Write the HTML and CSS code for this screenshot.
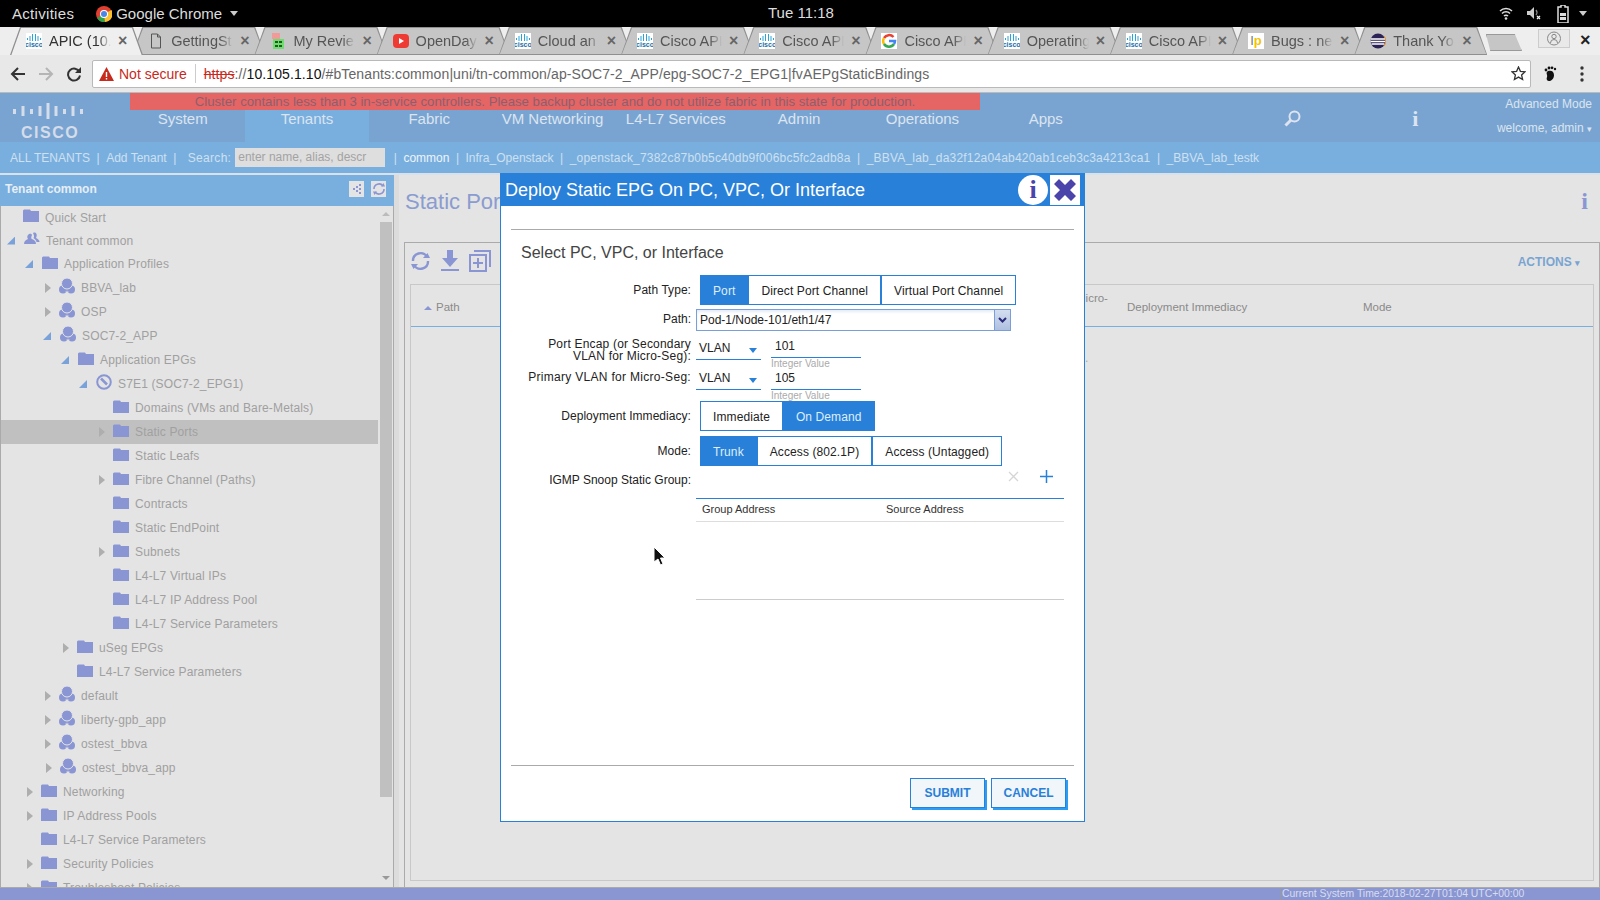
FILE: index.html
```html
<!DOCTYPE html>
<html lang="en">
<head>
  <meta charset="UTF-8" />
  <title>APIC</title>
  <link rel="stylesheet" href="styles.css">
</head>
<body>
  <svg class="defs" width="0" height="0">
    <symbol id="cisco-bars" viewBox="0 0 16 8">
      <path d="M1 5h1v2H1zM3.500 3h1v5h-1zM6 1h1v7H6zM9 1h1v7H9zM11.500 3h1v5h-1zM14 5h1v2h-1z" fill="#2aa3d8"/>
    </symbol>
    <symbol id="folder" viewBox="0 0 16 13">
      <path d="M0 1.500 1 .5h6l1 1.500h8v11H0z" fill="#8a96d3"/>
    </symbol>
    <symbol id="profile" viewBox="0 0 16 16">
      <circle cx="4" cy="11.500" r="4" fill="#8a96d3"/>
      <circle cx="12" cy="11.500" r="4" fill="#8a96d3"/>
      <circle cx="8" cy="5.500" r="5.500" fill="#8a96d3" stroke="#e4e4e4" stroke-width="1"/>
      <path d="M6.500 14a3 3 0 0 0 3 0" stroke="#e4e4e4" fill="none"/>
    </symbol>
  </svg>

  <div class="page">
    <!-- barra do sistema -->
    <div class="topbar">
      <span class="top-item activities">Activities</span>
      <svg class="chrome-logo" width="16" height="16" viewBox="0 0 16 16">
        <circle cx="8" cy="8" r="8" fill="#e0402f"/>
        <path d="M8 8 1 12a8 8 0 0 0 8 4z" fill="#2ea24a"/>
        <path d="M8 8l1 8a8 8 0 0 0 6.500-12z" fill="#fbc02d"/>
        <circle cx="8" cy="8" r="4" fill="#fff"/>
        <circle cx="8" cy="8" r="3" fill="#4a86e8"/>
      </svg>
      <span class="top-item">Google Chrome</span>
      <span class="top-caret"></span>
      <span class="clock">Tue 11:18</span>
      <div class="tray">
        <svg width="14" height="13" viewBox="0 0 14 13"><path d="M1 4a8.500 8.500 0 0 1 12 0M3 6.500a5.500 5.500 0 0 1 8 0M5 9a2.800 2.800 0 0 1 4 0" fill="none" stroke="#ddd" stroke-width="1.500"/><circle cx="7" cy="11.500" r="1.300" fill="#ddd"/></svg>
        <svg class="tray-sound" width="16" height="15" viewBox="0 0 16 15"><path d="M1 5h3l4-4v12l-4-4H1z" fill="#ccc"/><path d="M10 4a4 4 0 0 1 0 5" stroke="#888" fill="none" stroke-width="1.300"/><path d="M11 10l3 3m0-3-3 3" stroke="#eee" stroke-width="1.300"/></svg>
        <svg width="12" height="18" viewBox="0 0 12 18"><path d="M4 0h4v2h3v16H1V2h3z" fill="none" stroke="#ddd" stroke-width="1.500"/><rect x="3" y="8" width="6" height="3" fill="#ddd"/><rect x="3" y="12" width="6" height="3" fill="#ddd"/></svg>
        <span class="top-caret"></span>
      </div>
    </div>

    <!-- abas -->
    <div class="tabstrip">
      <div class="tab tab-active"><span class="fav fav-cisco"><svg width="16" height="8"><use href="#cisco-bars"/></svg><b>cisco</b></span><span class="tab-label">APIC (10.</span><span class="tab-x">×</span></div>
      <div class="tab"><svg class="fav" width="16" height="16" viewBox="0 0 16 16"><path d="M3.500 1h6l3 3v11h-9z M9.500 1v3h3" fill="none" stroke="#555"/></svg><span class="tab-label">GettingSt</span><span class="tab-x">×</span></div>
      <div class="tab"><svg class="fav" width="16" height="16" viewBox="0 0 16 16"><rect x="2" y="0" width="8" height="6" fill="#f29a9a"/><rect x="3" y="6" width="11" height="10" fill="#6fdc6f"/><path d="M5 8h3v2H5zM9 8h3v2H9zM5 12h3v2H5zM9 12h3v2H9z" fill="#1d5c1d"/></svg><span class="tab-label">My Revie</span><span class="tab-x">×</span></div>
      <div class="tab"><svg class="fav" width="16" height="16" viewBox="0 0 16 16"><rect y="1" width="16" height="14" rx="4" fill="#ee3b33"/><path d="M6 5l5 3-5 3z" fill="#fff"/></svg><span class="tab-label">OpenDay</span><span class="tab-x">×</span></div>
      <div class="tab"><span class="fav fav-cisco"><svg width="16" height="8"><use href="#cisco-bars"/></svg><b>cisco</b></span><span class="tab-label">Cloud an</span><span class="tab-x">×</span></div>
      <div class="tab"><span class="fav fav-cisco"><svg width="16" height="8"><use href="#cisco-bars"/></svg><b>cisco</b></span><span class="tab-label">Cisco API</span><span class="tab-x">×</span></div>
      <div class="tab"><span class="fav fav-cisco"><svg width="16" height="8"><use href="#cisco-bars"/></svg><b>cisco</b></span><span class="tab-label">Cisco API</span><span class="tab-x">×</span></div>
      <div class="tab"><svg class="fav" width="16" height="16" viewBox="0 0 16 16"><rect width="16" height="16" fill="#fff"/><path d="M12.500 4A6 6 0 0 0 3 5" stroke="#e94235" stroke-width="2.500" fill="none"/><path d="M3 5a6 6 0 0 0 0 6" stroke="#fbbc05" stroke-width="2.500" fill="none"/><path d="M3 11a6 6 0 0 0 10 0" stroke="#34a853" stroke-width="2.500" fill="none"/><path d="M8 8h6a6 6 0 0 1-1 3" stroke="#4285f4" stroke-width="2.500" fill="none"/></svg><span class="tab-label">Cisco API</span><span class="tab-x">×</span></div>
      <div class="tab"><span class="fav fav-cisco"><svg width="16" height="8"><use href="#cisco-bars"/></svg><b>cisco</b></span><span class="tab-label">Operating</span><span class="tab-x">×</span></div>
      <div class="tab"><span class="fav fav-cisco"><svg width="16" height="8"><use href="#cisco-bars"/></svg><b>cisco</b></span><span class="tab-label">Cisco API</span><span class="tab-x">×</span></div>
      <div class="tab"><span class="fav fav-ip"><b>I</b><i>p</i></span><span class="tab-label">Bugs : ne</span><span class="tab-x">×</span></div>
      <div class="tab"><svg class="fav" width="16" height="16" viewBox="0 0 16 16"><circle cx="8" cy="8" r="7.500" fill="#2c2255"/><path d="M1 6h14M.5 8.500h15M1.500 11h13" stroke="#fff" stroke-width="1.300"/><path d="M14 3a7.500 7.500 0 0 1 0 10" stroke="#e8912c" fill="none"/></svg><span class="tab-label">Thank Yo</span><span class="tab-x">×</span></div>
      <div class="newtab"></div>
      <div class="profile-btn">
        <svg width="14" height="15" viewBox="0 0 14 15"><circle cx="7" cy="7.500" r="6.500" fill="none" stroke="#888"/><circle cx="7" cy="5.500" r="2.200" fill="none" stroke="#888"/><path d="M3.500 12a3.500 3.500 0 0 1 7 0" fill="none" stroke="#888"/></svg>
      </div>
      <span class="win-close">×</span>
    </div>

    <!-- barra de endereco -->
    <div class="toolbar">
      <svg class="tool-btn" width="16" height="16" viewBox="0 0 16 16"><path d="M15 8H2M8 2 2 8l6 6" fill="none" stroke="#333" stroke-width="2"/></svg>
      <svg class="tool-btn" width="16" height="16" viewBox="0 0 16 16"><path d="M1 8h13M8 2l6 6-6 6" fill="none" stroke="#b5b5b5" stroke-width="2"/></svg>
      <svg class="tool-btn" width="16" height="16" viewBox="0 0 16 16"><path d="M13.500 6A6 6 0 1 0 14 9.500" fill="none" stroke="#333" stroke-width="2"/><path d="M15 1v6H9z" fill="#333"/></svg>
      <div class="omnibox">
        <svg class="warn" width="15" height="14" viewBox="0 0 15 14"><path d="M7.500 0 15 14H0z" fill="#c62a1c"/><path d="M6.800 5h1.400v5H6.800zM6.800 11h1.400v1.500H6.800z" fill="#fff"/></svg>
        <span class="not-secure">Not secure</span>
        <span class="omni-sep"></span>
        <span class="url"><span class="url-https">https</span>://<span class="url-host">10.105.1.10</span>/#bTenants:common|uni/tn-common/ap-SOC7-2_APP/epg-SOC7-2_EPG1|fvAEPgStaticBindings</span>
        <svg class="star" width="15" height="15" viewBox="0 0 15 15"><path d="m7.500 1 1.900 4.300 4.600.5-3.400 3.100 1 4.600-4.100-2.400-4.100 2.400 1-4.600L1 5.800l4.600-.5z" fill="none" stroke="#333" stroke-width="1.300"/></svg>
      </div>
      <svg class="ext" width="14" height="16" viewBox="0 0 14 16"><path d="M5 5c3-1 6 0 6 4s-3 6-5 6-3-2-2-4-2-4 1-6z" fill="#111"/><circle cx="3" cy="4" r="1.400" fill="#111"/><circle cx="6" cy="2" r="1.400" fill="#111"/><circle cx="9" cy="1.800" r="1.400" fill="#111"/><circle cx="12" cy="3" r="1.200" fill="#111"/></svg>
      <svg class="menu-dots" width="4" height="16" viewBox="0 0 4 16"><circle cx="2" cy="2" r="1.700" fill="#333"/><circle cx="2" cy="8" r="1.700" fill="#333"/><circle cx="2" cy="14" r="1.700" fill="#333"/></svg>
    </div>

    <!-- cabecalho APIC -->
    <header class="app-header">
      <div class="logo">
        <svg width="70" height="16" viewBox="0 0 70 16"><path d="M0 6h3v5H0zM8.500 3h3v10h-3zM17 6h3v5h-3zM25.500 3h3v10h-3zM33.500 0h3v16h-3zM41.500 3h3v10h-3zM50 6h3v5h-3zM58.500 3h3v10h-3zM67 6h3v5h-3z" fill="#d5dcea"/></svg>
        <span class="logo-text">CISCO</span>
      </div>
      <div class="header-mid">
        <div class="alert-bar">Cluster contains less than 3 in-service controllers. Please backup cluster and do not utilize fabric in this state for production.</div>
        <nav class="main-nav">
          <a class="nav-item">System</a>
          <a class="nav-item nav-active">Tenants</a>
          <a class="nav-item">Fabric</a>
          <a class="nav-item">VM Networking</a>
          <a class="nav-item">L4-L7 Services</a>
          <a class="nav-item">Admin</a>
          <a class="nav-item">Operations</a>
          <a class="nav-item">Apps</a>
          <a class="nav-item nav-search">
            <svg width="17" height="17" viewBox="0 0 17 17"><circle cx="10.500" cy="6.500" r="5" fill="none" stroke="#dde4f0" stroke-width="2"/><path d="M7 10 1.500 15.500" stroke="#dde4f0" stroke-width="3"/></svg>
          </a>
          <a class="nav-item nav-info"><span class="serif-i">i</span></a>
        </nav>
      </div>
      <div class="header-right">
        <span>Advanced Mode</span>
        <span>welcome, admin <small class="tiny-caret">▾</small></span>
      </div>
    </header>

    <div class="subnav">
      <span class="sub-link first">ALL TENANTS</span><span class="bar">|</span>
      <span class="sub-link">Add Tenant</span><span class="bar">|</span>
      <span class="sub-search">Search:</span>
      <span class="sub-input">enter name, alias, descr</span>
      <span class="bar bar-gap">|</span>
      <span class="sub-link sub-current">common</span><span class="bar">|</span>
      <span class="sub-link">Infra_Openstack</span><span class="bar">|</span>
      <span class="sub-link sub-id">_openstack_7382c87b0b5c40db9f006bc5fc2adb8a</span><span class="bar">|</span>
      <span class="sub-link sub-id">_BBVA_lab_da32f12a04ab420ab1ceb3c3a4213ca1</span><span class="bar">|</span>
      <span class="sub-link">_BBVA_lab_testk</span>
    </div>

    <div class="main">
      <aside class="sidebar">
        <div class="side-head">
          <span>Tenant common</span>
          <span class="side-btn">
            <svg width="12" height="12" viewBox="0 0 12 12"><path d="M2 5h2v2H2zM5 3h2v2H5zM5 7h2v2H5zM8 1h2v2H8zM8 5h2v2H8zM8 9h2v2H8z" fill="#8a96d3"/></svg>
          </span>
          <span class="side-btn">
            <svg width="14" height="14" viewBox="0 0 14 14"><path d="M2 7a5 5 0 0 1 9-3M12 7a5 5 0 0 1-9 3" fill="none" stroke="#8a96d3" stroke-width="1.600"/><path d="M9 4.500h4L11.500 1zM5 9.500H1L2.500 13z" fill="#8a96d3"/></svg>
          </span>
        </div>
        <div class="side-body">
          <ul class="tree">
            <li class="row row-s d0"><i class="arr"></i><svg class="ti"><use href="#folder"/></svg><span>Quick Start</span></li>
            <li class="row row-s d0b"><i class="arr open"></i><svg class="ti" viewBox="0 0 16 13"><path d="M0 12c0-3 2-4 4-5-1-1-1-3 0-4s3-2 4 0c-1 2-1 4 0 4 2 1 4 2 4 5z M9 1c2-1 3 0 3.500 1s0 3-.5 4c2 1 3.500 2 3.500 4h-3c0-2-2-3-3-4 1-1 .5-3-.5-5z" fill="#8a96d3"/></svg><span class="lbl-t">Tenant common</span></li>
            <li class="row d1b"><i class="arr open"></i><svg class="ti"><use href="#folder"/></svg><span>Application Profiles</span></li>
            <li class="row d2"><i class="arr closed"></i><svg class="ti ti-p"><use href="#profile"/></svg><span>BBVA_lab</span></li>
            <li class="row d2"><i class="arr closed"></i><svg class="ti ti-p"><use href="#profile"/></svg><span>OSP</span></li>
            <li class="row d2b"><i class="arr open"></i><svg class="ti ti-p"><use href="#profile"/></svg><span>SOC7-2_APP</span></li>
            <li class="row d3b"><i class="arr open"></i><svg class="ti"><use href="#folder"/></svg><span>Application EPGs</span></li>
            <li class="row d4"><i class="arr open"></i><svg class="ti ti-p" viewBox="0 0 16 16"><circle cx="8" cy="8" r="6.800" fill="none" stroke="#8a96d3" stroke-width="2"/><path d="M5 4.500l6 6" stroke="#8a96d3" stroke-width="2.500"/></svg><span>S7E1 (SOC7-2_EPG1)</span></li>
            <li class="row d5"><i class="arr"></i><svg class="ti"><use href="#folder"/></svg><span>Domains (VMs and Bare-Metals)</span></li>
            <li class="row d5 row-sel"><i class="arr closed"></i><svg class="ti"><use href="#folder"/></svg><span>Static Ports</span></li>
            <li class="row d5"><i class="arr"></i><svg class="ti"><use href="#folder"/></svg><span>Static Leafs</span></li>
            <li class="row d5"><i class="arr closed"></i><svg class="ti"><use href="#folder"/></svg><span>Fibre Channel (Paths)</span></li>
            <li class="row d5"><i class="arr"></i><svg class="ti"><use href="#folder"/></svg><span>Contracts</span></li>
            <li class="row d5"><i class="arr"></i><svg class="ti"><use href="#folder"/></svg><span>Static EndPoint</span></li>
            <li class="row d5"><i class="arr closed"></i><svg class="ti"><use href="#folder"/></svg><span>Subnets</span></li>
            <li class="row d5"><i class="arr"></i><svg class="ti"><use href="#folder"/></svg><span>L4-L7 Virtual IPs</span></li>
            <li class="row d5"><i class="arr"></i><svg class="ti"><use href="#folder"/></svg><span>L4-L7 IP Address Pool</span></li>
            <li class="row d5"><i class="arr"></i><svg class="ti"><use href="#folder"/></svg><span>L4-L7 Service Parameters</span></li>
            <li class="row d3"><i class="arr closed"></i><svg class="ti"><use href="#folder"/></svg><span>uSeg EPGs</span></li>
            <li class="row d3"><i class="arr"></i><svg class="ti"><use href="#folder"/></svg><span>L4-L7 Service Parameters</span></li>
            <li class="row d2"><i class="arr closed"></i><svg class="ti ti-p"><use href="#profile"/></svg><span>default</span></li>
            <li class="row d2"><i class="arr closed"></i><svg class="ti ti-p"><use href="#profile"/></svg><span>liberty-gpb_app</span></li>
            <li class="row d2"><i class="arr closed"></i><svg class="ti ti-p"><use href="#profile"/></svg><span>ostest_bbva</span></li>
            <li class="row d2b"><i class="arr closed"></i><svg class="ti ti-p"><use href="#profile"/></svg><span>ostest_bbva_app</span></li>
            <li class="row d1"><i class="arr closed"></i><svg class="ti"><use href="#folder"/></svg><span>Networking</span></li>
            <li class="row d1"><i class="arr closed"></i><svg class="ti"><use href="#folder"/></svg><span>IP Address Pools</span></li>
            <li class="row d1"><i class="arr"></i><svg class="ti"><use href="#folder"/></svg><span>L4-L7 Service Parameters</span></li>
            <li class="row d1"><i class="arr closed"></i><svg class="ti"><use href="#folder"/></svg><span>Security Policies</span></li>
            <li class="row d1"><i class="arr closed"></i><svg class="ti"><use href="#folder"/></svg><span>Troubleshoot Policies</span></li>
          </ul>
          <div class="scrollbar">
            <span class="sc-up"></span>
            <span class="sc-thumb"></span>
            <span class="sc-down"></span>
          </div>
        </div>
      </aside>
      <div class="divider"></div>

      <section class="content">
        <div class="content-head">
          <h1 class="content-title">Static Ports</h1>
          <span class="serif-i content-i">i</span>
        </div>
        <div class="panel">
          <div class="panel-tools">
            <svg width="21" height="20" viewBox="0 0 21 20"><path d="M3 10a7.500 7.500 0 0 1 14-4M18 10a7.500 7.500 0 0 1-14 4" fill="none" stroke="#8a96d3" stroke-width="2.400"/><path d="M13 7h7l-2.500-5zM8 13H1l2.500 5z" fill="#8a96d3"/></svg>
            <svg width="18" height="21" viewBox="0 0 18 21"><path d="M6 0h6v8h5l-8 9-8-9h5zM0 19h18v2H0z" fill="#8a96d3"/></svg>
            <svg width="22" height="22" viewBox="0 0 22 22"><path d="M5 1h16v16M1 5h16v16H1z" fill="none" stroke="#8a96d3" stroke-width="2"/><path d="M8 8h2v4h4v2h-4v4H8v-4H4v-2h4z" fill="#8a96d3"/></svg>
            <span class="actions">ACTIONS <small class="tiny-caret">▾</small></span>
          </div>
          <div class="grid-box">
            <div class="grid-head">
              <span class="col-path"><i class="sort-up"></i>Path</span>
              <span class="col-micro">Micro-</span>
              <span class="col-deploy">Deployment Immediacy</span>
              <span class="col-mode">Mode</span>
            </div>
          </div>
        </div>
      </section>
    </div>

    <footer class="statusbar"><span class="status-time">Current System Time:2018-02-27T01:04 UTC+00:00</span></footer>
  </div>

  <!-- dialogo -->
  <div class="dialog">
    <div class="dlg-head">
      <span class="dlg-title">Deploy Static EPG On PC, VPC, Or Interface</span>
      <span class="dlg-info"><span class="serif-i">i</span></span>
      <span class="dlg-close">
        <svg width="22" height="22" viewBox="0 0 22 22"><path d="M5 0l6 6 6-6 5 5-6 6 6 6-5 5-6-6-6 6-5-5 6-6-6-6z" fill="#4a44ab"/></svg>
      </span>
    </div>
    <div class="dlg-body">
      <h2 class="dlg-heading">Select PC, VPC, or Interface</h2>

      <div class="frow frow-seg">
        <label class="flabel">Path Type:</label>
        <div class="seg"><span class="seg-btn on">Port</span><span class="seg-btn">Direct Port Channel</span><span class="seg-btn">Virtual Port Channel</span></div>
      </div>
      <div class="frow frow-path">
        <label class="flabel">Path:</label>
        <div class="combo"><span class="combo-text">Pod-1/Node-101/eth1/47</span><span class="combo-btn"><svg width="9" height="6" viewBox="0 0 9 6"><path d="M1 1l3.500 3.500L8 1" fill="none" stroke="#2b2a7c" stroke-width="2"/></svg></span></div>
      </div>
      <div class="frow frow-encap">
        <label class="flabel flabel-two">Port Encap (or Secondary<br>VLAN for Micro-Seg):</label>
        <div class="vsel vsel-tall">VLAN<i class="vsel-arrow"></i></div>
        <div class="vinput"><div class="vinput-box">101</div><div class="vhint">Integer Value</div></div>
      </div>
      <div class="frow frow-primary">
        <label class="flabel flabel-prim">Primary VLAN for Micro-Seg:</label>
        <div class="vsel">VLAN<i class="vsel-arrow"></i></div>
        <div class="vinput"><div class="vinput-box vinput-short">105</div><div class="vhint">Integer Value</div></div>
      </div>
      <div class="frow frow-seg">
        <label class="flabel">Deployment Immediacy:</label>
        <div class="seg"><span class="seg-btn">Immediate</span><span class="seg-btn on">On Demand</span></div>
      </div>
      <div class="frow frow-seg frow-mode">
        <label class="flabel">Mode:</label>
        <div class="seg"><span class="seg-btn on">Trunk</span><span class="seg-btn">Access (802.1P)</span><span class="seg-btn">Access (Untagged)</span></div>
      </div>
      <div class="frow frow-igmp">
        <label class="flabel">IGMP Snoop Static Group:</label>
        <div class="igmp-tools">
          <svg width="11" height="11" viewBox="0 0 11 11"><path d="M1 1l9 9M10 1l-9 9" stroke="#d5d5d5" stroke-width="1.300"/></svg>
          <svg width="13" height="13" viewBox="0 0 13 13"><path d="M6.500 0v13M0 6.500h13" stroke="#2880d9" stroke-width="1.500"/></svg>
        </div>
      </div>
      <div class="igmp-table">
        <div class="igmp-head"><span class="igmp-col">Group Address</span><span>Source Address</span></div>
        <div class="igmp-rows"></div>
      </div>

      <div class="dlg-foot">
        <button class="dlg-btn">SUBMIT</button>
        <button class="dlg-btn">CANCEL</button>
      </div>
    </div>
  </div>

  <svg class="cursor" width="13" height="20" viewBox="0 0 13 20"><path d="M1 1v15l4-3 2.500 6 2.500-1-2.500-6H12z" fill="#111" stroke="#fff"/></svg>
  <span class="stray-dot">.</span>
</body>
</html>
```

FILE: styles.css
```css
* {
  box-sizing: border-box;
}

html, body {
  margin: 0;
  height: 900px;
  overflow: hidden;
}

body {
  font-family: "Liberation Sans", Arial, sans-serif;
  font-size: 12px;
  background: #e4e4e4;
}

.defs {
  position: absolute;
}

.page {
  display: flex;
  flex-direction: column;
  width: 1600px;
  height: 900px;
}

/* system bar */
.topbar {
  display: flex;
  align-items: center;
  flex: 0 0 27px;
  background: #000;
  color: #ddd;
  font-size: 15px;
  padding-left: 12px;
  position: relative;
}

.activities {
  margin-right: 22px;
  letter-spacing: .3px;
}

.chrome-logo {
  margin-right: 4px;
}

.top-caret {
  display: inline-block;
  width: 0;
  height: 0;
  margin-left: 8px;
  border-left: 4.500px solid transparent;
  border-right: 4.500px solid transparent;
  border-top: 5px solid #ccc;
}

.clock {
  position: absolute;
  left: 768px;
  top: 4px;
}

.tray {
  margin-left: auto;
  display: flex;
  align-items: center;
  gap: 13px;
  padding-right: 13px;
}

.tray .top-caret {
  margin-left: -3px;
}

.tray-sound {
  margin-right: 2px;
}

/* tabs */
.tabstrip {
  display: flex;
  flex: 0 0 28px;
  background: #eeeeee;
  padding-left: 10px;
  position: relative;
  align-items: stretch;
}

.tab {
  position: relative;
  display: flex;
  align-items: center;
  flex: 0 0 133px;
  margin-right: -10.800px;
  padding-left: 16px;
  color: #555;
  font-size: 14.500px;
  background: #8f8f8f;
  clip-path: polygon(0 100%, 10px 0, calc(100% - 10px) 0, 100% 100%);
}

.tab::before {
  content: "";
  position: absolute;
  inset: 1px 0 1px 0;
  background: #c6c6c6;
  clip-path: polygon(1px 100%, 11px 0, calc(100% - 11px) 0, calc(100% - 1px) 100%);
}

.tab > * {
  position: relative;
}

.tab-active {
  z-index: 2;
  color: #333;
}

.tab-active::before {
  background: #efefef;
  inset: 1px 0 -1px 0;
}

.fav {
  flex: 0 0 16px;
  margin-right: 7px;
}

.fav-cisco {
  display: flex;
  flex-direction: column;
  align-items: center;
  height: 16px;
  background: #fff;
  overflow: hidden;
}

.fav-cisco b {
  font-size: 7px;
  line-height: 8px;
  color: #1b6fa8;
}

.fav-ip {
  display: flex;
  justify-content: center;
  height: 16px;
  background: #fff;
  font-size: 13px;
  line-height: 16px;
  color: #777;
}

.fav-ip b {
  font-weight: normal;
}

.fav-ip i {
  font-style: normal;
  font-weight: bold;
  color: #f5c400;
}

.tab-label {
  width: 62px;
  white-space: nowrap;
  overflow: hidden;
  -webkit-mask-image: linear-gradient(90deg, #000 80%, transparent);
  mask-image: linear-gradient(90deg, #000 80%, transparent);
}

.tab-x {
  margin-left: 7px;
  font-size: 16px;
  font-weight: bold;
  line-height: 16px;
  color: #666;
}

.newtab {
  position: absolute;
  left: 1486px;
  top: 7px;
  width: 36px;
  height: 17px;
  background: #c6c6c6;
  border: 1px solid #999;
  clip-path: polygon(0 0, 80% 0, 100% 100%, 12% 100%);
}

.profile-btn {
  position: absolute;
  left: 1538px;
  top: 2px;
  width: 32px;
  height: 19px;
  display: flex;
  align-items: center;
  justify-content: center;
  background: #e9e9e9;
  border: 1px solid #ccc;
}

.win-close {
  position: absolute;
  left: 1580px;
  top: 4px;
  font-size: 18px;
  font-weight: bold;
  line-height: 18px;
  color: #222;
}

/* address bar */
.toolbar {
  display: flex;
  align-items: center;
  flex: 0 0 38px;
  background: #e8e8e8;
  border-bottom: 1px solid #bbb;
  padding-left: 10px;
}

.tool-btn {
  margin-right: 12px;
}

.omnibox {
  display: flex;
  align-items: center;
  margin-left: -2px;
  width: 1439px;
  height: 28px;
  background: #fff;
  border: 1px solid #b9b9b9;
  border-radius: 2px;
  padding-left: 6px;
  font-size: 14px;
}

.warn {
  margin-right: 5px;
}

.not-secure {
  color: #c62a1c;
}

.omni-sep {
  width: 1px;
  height: 19px;
  background: #ccc;
  margin: 0 8px;
}

.url {
  color: #666;
  white-space: nowrap;
  letter-spacing: .1px;
}

.url-https {
  color: #c62a1c;
  text-decoration: line-through;
}

.url-host {
  color: #111;
}

.star {
  margin-left: auto;
  margin-right: 4px;
}

.ext {
  margin-left: 12px;
}

.menu-dots {
  margin-left: 23px;
}

/* APIC header */
.app-header {
  display: flex;
  flex: 0 0 49px;
  background: #79a4d1;
  color: #dbe4f0;
}

.logo {
  flex: 0 0 122px;
  padding: 10px 0 0 13px;
  display: flex;
  flex-direction: column;
  align-items: flex-start;
  gap: 8px;
}

.logo-text {
  margin: 0 0 0 8px;
  font-size: 16px;
  font-weight: bold;
  line-height: 12px;
  letter-spacing: 1.500px;
  color: #d5dcea;
}

.header-mid {
  display: flex;
  flex-direction: column;
  flex: 0 0 1355px;
}

.alert-bar {
  flex: 0 0 17px;
  width: 850px;
  margin-left: 8px;
  background: #e56565;
  color: #8d5f6d;
  font-size: 13.200px;
  line-height: 17px;
  text-align: center;
  white-space: nowrap;
}

.main-nav {
  display: flex;
  flex: 1;
  margin-left: -1px;
}

.nav-item {
  flex: 0 0 123.300px;
  text-align: center;
  font-size: 15px;
  line-height: 17px;
  color: #dbe4f0;
}

.nav-active {
  background: #79afdf;
  margin-left: 1px;
  margin-right: -1px;
}

.nav-search {
  margin-left: 123px;
}

.nav-info {
  margin-left: 0;
}

.serif-i {
  font-family: "Liberation Serif", "DejaVu Serif", serif;
  font-weight: bold;
}

.nav-info .serif-i {
  font-size: 22px;
}

.header-right {
  flex: 1;
  display: flex;
  flex-direction: column;
  align-items: flex-end;
  gap: 11px;
  padding: 5px 8px 0 0;
  font-size: 12px;
  line-height: 13px;
  white-space: nowrap;
}

.tiny-caret {
  font-size: 9px;
}

.subnav {
  display: flex;
  align-items: center;
  flex: 0 0 33px;
  padding: 0 0 0 10px;
  background: #79afdf;
  border-bottom: 2px solid #d9e2ea;
  color: #cfe0f0;
  white-space: nowrap;
}

.bar {
  margin: 0 6.500px;
}

.sub-search {
  margin: 0 4px 0 5px;
  letter-spacing: .3px;
}

.sub-id {
  letter-spacing: .2px;
}

.sub-input {
  width: 150px;
  height: 19px;
  padding-left: 3px;
  background: #dedede;
  color: #a3a3a3;
  line-height: 18px;
}

.bar-gap {
  margin-left: 8.500px;
}

.sub-current {
  color: #eef4fa;
}

/* main area */
.main {
  display: flex;
  flex: 1;
  min-height: 0;
}

.sidebar {
  display: flex;
  flex-direction: column;
  flex: 0 0 394px;
  border-left: 1px solid #aaa;
  border-right: 1px solid #aaa;
}

.side-head {
  display: flex;
  align-items: center;
  gap: 7px;
  flex: 0 0 31px;
  margin-left: -1px;
  margin-right: -1px;
  padding: 0 8px 4px 5px;
  background: #79afdf;
  color: #e6eef6;
  font-weight: bold;
}

.side-head span:first-child {
  margin-right: auto;
}

.side-btn {
  display: flex;
  align-items: center;
  justify-content: center;
  width: 15px;
  height: 16px;
  background: #e4e4e4;
}

.side-body {
  display: flex;
  flex: 1;
  min-height: 0;
  overflow: hidden;
}

.tree {
  list-style: none;
  margin: 0;
  padding: 0;
  width: 377px;
  flex: 0 0 377px;
  color: #a0a0a0;
  letter-spacing: .15px;
}

.row {
  display: flex;
  align-items: center;
  height: 24px;
  white-space: nowrap;
}

.row-s {
  height: 23px;
}

.row-sel {
  background: #c0c0c0;
}

.d0 { padding-left: 4px; }
.d0b { padding-left: 5px; }
.d1 { padding-left: 22px; }
.d1b { padding-left: 23px; }
.d2 { padding-left: 40px; }
.d2b { padding-left: 41px; }
.d3 { padding-left: 58px; }
.d3b { padding-left: 59px; }
.d4 { padding-left: 77px; }
.d5 { padding-left: 94px; }

.arr {
  flex: 0 0 18px;
  height: 10px;
  display: block;
  position: relative;
}

.arr.open::before {
  content: "";
  position: absolute;
  left: 1px;
  top: 1px;
  width: 8px;
  height: 8px;
  background: #7aa2da;
  clip-path: polygon(100% 0, 100% 100%, 0 100%);
}

.arr.closed::before {
  content: "";
  position: absolute;
  left: 4px;
  top: 0;
  width: 6px;
  height: 10px;
  background: #aeaeae;
  clip-path: polygon(0 0, 100% 50%, 0 100%);
}

.ti {
  flex: 0 0 16px;
  width: 16px;
  height: 13px;
  margin: -4px 6px 0 0;
}

.ti-p {
  height: 16px;
}

.scrollbar {
  position: relative;
  flex: 0 0 12px;
  margin-left: 2px;
}

.sc-up,
.sc-down {
  position: absolute;
  left: 2px;
  width: 0;
  height: 0;
  border-left: 4px solid transparent;
  border-right: 4px solid transparent;
}

.sc-up {
  top: 6px;
  border-bottom: 4px solid #bbb;
}

.sc-down {
  bottom: 7px;
  border-top: 4px solid #999;
}

.sc-thumb {
  position: absolute;
  top: 16px;
  left: 0;
  width: 12px;
  height: 575px;
  background: #c0c0c0;
}

.divider {
  flex: 0 0 5px;
  background: #dcdcdc;
}

.content {
  flex: 1;
  display: flex;
  flex-direction: column;
  min-width: 0;
  padding-left: 5px;
}

.content-head {
  display: flex;
  align-items: center;
  justify-content: space-between;
  flex: 0 0 67px;
  padding: 0 12px 14px 1px;
}

.content-title {
  margin: 0;
  font-size: 22px;
  font-weight: normal;
  color: #8a9cd0;
}

.content-i {
  font-size: 24px;
  color: #8a96d3;
}

.panel {
  flex: 1;
  display: flex;
  flex-direction: column;
  border-top: 1px solid #aaa;
  border-left: 1px solid #aaa;
  border-right: 1px solid #aaa;
  padding: 0 5px 6px 5px;
}

.panel-tools {
  display: flex;
  align-items: center;
  gap: 10px;
  flex: 0 0 41px;
  padding: 0 0 6px 0;
}

.actions {
  margin-left: auto;
  margin-right: 14px;
  padding-top: 3px;
  color: #79a4d1;
  font-weight: bold;
}

.grid-box {
  flex: 1;
  border: 1px solid #c8c8c8;
}

.grid-head {
  display: flex;
  align-items: center;
  height: 42px;
  border-bottom: 1px solid #79afdf;
  color: #8a8a8a;
  font-size: 11.500px;
  position: relative;
}

.col-path {
  position: absolute;
  left: 13px;
  top: 16px;
  padding-left: 12px;
  color: #8a8a8a;
}

.sort-up {
  position: absolute;
  left: 0;
  top: 5px;
  width: 0;
  height: 0;
  border-left: 4px solid transparent;
  border-right: 4px solid transparent;
  border-bottom: 4px solid #8a96d3;
}

.col-micro {
  position: absolute;
  left: 665px;
  top: 7px;
}

.col-deploy {
  position: absolute;
  left: 716px;
  top: 16px;
}

.col-mode {
  position: absolute;
  left: 952px;
  top: 16px;
}

.statusbar {
  display: flex;
  flex: 0 0 13px;
  background: #8a96d2;
  border-top: 1px solid #aaa;
  color: #d8dcef;
  font-size: 10.400px;
  line-height: 12px;
}

.status-time {
  margin-left: 1280px;
  padding-left: 1px;
  border-left: 1px solid #9a9a9a;
}

/* dialog */
.dialog {
  position: absolute;
  left: 500px;
  top: 173px;
  width: 585px;
  height: 649px;
  display: flex;
  flex-direction: column;
  background: #fff;
  border: 1px solid #2880d9;
}

.dlg-head {
  display: flex;
  align-items: center;
  flex: 0 0 33px;
  margin: -1px -1px 0;
  padding: 0 4px 0 5px;
  background: #2880d9;
  color: #fff;
}

.dlg-title {
  font-size: 18px;
  margin-right: auto;
  padding-top: 1px;
}

.dlg-info {
  display: flex;
  align-items: center;
  justify-content: center;
  width: 30px;
  height: 30px;
  margin-right: 2px;
  border-radius: 50%;
  background: #fff;
  color: #4a44ab;
  font-size: 26px;
}

.dlg-close {
  display: flex;
  align-items: center;
  justify-content: center;
  width: 30px;
  height: 30px;
  background: #fff;
  margin-right: 1px;
}

.dlg-body {
  flex: 1;
  display: flex;
  flex-direction: column;
  margin-top: 23px;
  padding: 0 10px;
  color: #222;
}

.dlg-heading {
  margin: 0 0 12px;
  padding: 13px 0 0 10px;
  border-top: 1px solid #aaa;
  font-size: 16px;
  line-height: 20px;
  font-weight: normal;
  color: #444;
  box-sizing: content-box;
  height: 20px;
}

.frow {
  display: flex;
  margin-left: -10px;
}

.flabel {
  flex: 0 0 190px;
  text-align: right;
  white-space: nowrap;
  color: #222;
}

.frow-seg {
  height: 30px;
  margin-bottom: 5px;
}

.frow-seg .flabel {
  line-height: 30px;
  letter-spacing: .05px;
}

.frow-seg .seg {
  margin-left: 9px;
}

.seg {
  display: flex;
}

.seg-btn {
  display: block;
  height: 30px;
  padding: 0 12px;
  line-height: 30px;
  border: 1px solid #2880d9;
  color: #222;
  white-space: nowrap;
  letter-spacing: .1px;
}

.seg-btn.on {
  background: #2880d9;
  color: #dfeefc;
}

.frow-path {
  height: 22px;
  margin: -1px 0 3px -10px;
}

.frow-path .flabel {
  line-height: 21px;
}

.combo {
  display: flex;
  margin-left: 5px;
  width: 315px;
  height: 22px;
  border: 1px solid #7a9fd8;
  box-shadow: inset 0 2px 3px #e4ecf6;
}

.combo-text {
  flex: 1;
  padding-left: 3px;
  line-height: 20px;
}

.combo-btn {
  display: flex;
  align-items: center;
  justify-content: center;
  width: 16px;
  background: linear-gradient(#d3deef, #aebfe0);
  border-left: 1px solid #7a9fd8;
}

.frow-encap {
  height: 34px;
}

.flabel-two {
  padding-top: 4px;
  line-height: 12px;
  letter-spacing: .2px;
}

.frow-primary {
  height: 33px;
}

.flabel-prim {
  padding-top: 3px;
  line-height: 12px;
  letter-spacing: .3px;
}

.vsel {
  position: relative;
  margin: 0 10px 0 5px;
  flex: 0 0 65px;
  height: 22px;
  padding: 4px 0 0 3px;
  line-height: 13px;
  border-bottom: 1px solid #2880d9;
  color: #222;
}

.vsel-tall {
  height: 26px;
  padding-top: 8px;
}

.vsel-arrow {
  position: absolute;
  right: 4px;
  bottom: 6px;
  width: 0;
  height: 0;
  border-left: 4.500px solid transparent;
  border-right: 4.500px solid transparent;
  border-top: 5px solid #2880d9;
}

.vinput {
  flex: 0 0 90px;
}

.vinput-box {
  height: 24px;
  padding: 0 0 0 4px;
  line-height: 24px;
  border-bottom: 1px solid #2880d9;
}

.vinput-short {
  height: 22px;
  line-height: 21px;
}

.vhint {
  font-size: 10px;
  line-height: 11px;
  color: #aaa;
}

.frow-mode {
  margin-bottom: 0;
}

.frow-igmp {
  height: 32px;
  margin-left: -10px;
}

.frow-igmp .flabel {
  padding-top: 7px;
  line-height: 14px;
}

.igmp-tools {
  display: flex;
  align-items: center;
  gap: 21px;
  height: 20px;
  margin-left: auto;
  margin-right: 21px;
}

.igmp-table {
  margin-left: 185px;
  width: 368px;
  border-top: 1px solid #2880d9;
}

.igmp-head {
  display: flex;
  height: 23px;
  padding: 3px 0 0 6px;
  line-height: 14px;
  font-size: 11px;
  color: #333;
  border-bottom: 1px solid #ddd;
}

.igmp-col {
  flex: 0 0 184px;
}

.igmp-rows {
  height: 78px;
  border-bottom: 1px solid #ccc;
}

.dlg-foot {
  margin-top: auto;
  display: flex;
  justify-content: flex-end;
  gap: 6px;
  height: 56px;
  padding: 12px 8px 0 0;
  border-top: 1px solid #aaa;
}

.dlg-btn {
  width: 75px;
  height: 30px;
  padding: 0;
  border: 1px solid #2880d9;
  background: #f0f6fa;
  box-shadow: 2px 2px 0 #2a9df4;
  color: #2880d9;
  font-family: "Liberation Sans", Arial, sans-serif;
  font-size: 12px;
  font-weight: bold;
}

.cursor {
  position: absolute;
  left: 653px;
  top: 546px;
}

.stray-dot {
  position: absolute;
  left: 1085px;
  top: 351px;
  color: #aaa;
}
```
